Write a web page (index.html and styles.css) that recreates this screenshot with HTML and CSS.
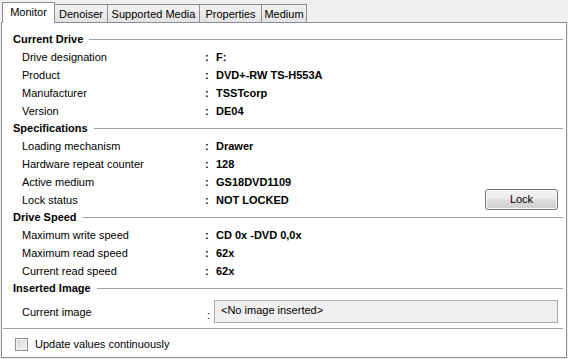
FILE: index.html
```html
<!DOCTYPE html>
<html>
<head>
<meta charset="utf-8">
<link rel="stylesheet" href="styles.css">
</head>
<body>
<div class="window">
  <div class="tabs">
    <div class="tab tab-active w-monitor">Monitor</div>
    <div class="tab w-denoiser">Denoiser</div>
    <div class="tab w-media">Supported Media</div>
    <div class="tab w-props">Properties</div>
    <div class="tab w-medium">Medium</div>
  </div>
  <div class="panel">
    <div class="section-head"><span class="head-text">Current Drive</span><span class="rule"></span></div>
    <div class="rows">
      <div class="label">Drive designation</div><div class="colon">:</div><div class="value">F:</div>
      <div class="label">Product</div><div class="colon">:</div><div class="value">DVD+-RW TS-H553A</div>
      <div class="label">Manufacturer</div><div class="colon">:</div><div class="value">TSSTcorp</div>
      <div class="label">Version</div><div class="colon">:</div><div class="value">DE04</div>
    </div>
    <div class="section-head"><span class="head-text">Specifications</span><span class="rule"></span></div>
    <div class="rows">
      <div class="label">Loading mechanism</div><div class="colon">:</div><div class="value">Drawer</div>
      <div class="label">Hardware repeat counter</div><div class="colon">:</div><div class="value">128</div>
      <div class="label">Active medium</div><div class="colon">:</div><div class="value">GS18DVD1109</div>
      <div class="label">Lock status</div><div class="colon">:</div><div class="value">NOT LOCKED</div><button class="btn">Lock</button>
    </div>
    <div class="section-head"><span class="head-text">Drive Speed</span><span class="rule"></span></div>
    <div class="rows">
      <div class="label">Maximum write speed</div><div class="colon">:</div><div class="value">CD 0x -DVD 0,0x</div>
      <div class="label">Maximum read speed</div><div class="colon">:</div><div class="value">62x</div>
      <div class="label">Current read speed</div><div class="colon">:</div><div class="value">62x</div>
    </div>
    <div class="section-head"><span class="head-text">Inserted Image</span><span class="rule"></span></div>
    <div class="image-row">
      <div class="label">Current image</div><div class="colon-plain">:</div><div class="image-box">&lt;No image inserted&gt;</div>
    </div>
    <div class="separator"></div>
    <label class="check-row"><span class="checkbox"></span><span class="check-text">Update values continuously</span></label>
  </div>
</div>
</body>
</html>
```
FILE: styles.css
```css
html, body {
  margin: 0;
  padding: 0;
  background: #f0f0f0;
}
body {
  width: 568px;
  height: 359px;
  overflow: hidden;
  font-family: "Liberation Sans", Arial, sans-serif;
  font-size: 11px;
  color: #000;
}
.window {
  display: flex;
  flex-direction: column;
}
.tabs {
  display: flex;
  align-items: flex-end;
  height: 22px;
  padding-left: 2px;
}
.tab {
  box-sizing: border-box;
  height: 18px;
  border: 1px solid #898c95;
  border-bottom: none;
  background: linear-gradient(#f3f3f3, #e3e3e3);
  display: flex;
  align-items: center;
  justify-content: center;
  margin-left: -1px;
  padding-top: 1px;
}
.tab-active {
  position: relative;
  z-index: 1;
  height: 21px;
  margin-bottom: -1px;
  margin-left: 0;
  background: #fff;
  padding-top: 0;
  padding-bottom: 2px;
}
.w-monitor { width: 53px; }
.w-denoiser { width: 54px; }
.w-media { width: 93px; }
.w-props { width: 63px; }
.w-medium { width: 46px; }
.panel {
  box-sizing: border-box;
  margin-left: 1px;
  width: 566px;
  height: 336px;
  border: 1px solid #898c95;
  background: #fff;
  padding-top: 8px;
  display: flex;
  flex-direction: column;
}
.section-head {
  display: flex;
  align-items: center;
  height: 17px;
  padding-left: 11px;
  padding-right: 3px;
  gap: 6px;
}
.head-text {
  font-weight: bold;
  line-height: 17px;
}
.rule {
  flex: 1;
  height: 1px;
  background: #a0a0a0;
}
.rows {
  display: grid;
  grid-template-columns: 183px 11px 1fr 73px;
  grid-auto-rows: 18px;
  align-items: center;
  padding-left: 20px;
  padding-right: 8px;
}
.label {
  line-height: 18px;
  white-space: nowrap;
}
.colon, .value {
  font-weight: bold;
  line-height: 18px;
  white-space: nowrap;
}
.colon {
  grid-column: 2;
}
.label {
  grid-column: 1;
}
.value {
  grid-column: 3;
}
.btn {
  grid-column: 4;
  grid-row: 4;
  align-self: start;
  margin: -2px 0 0 0;
  box-sizing: border-box;
  width: 73px;
  height: 21px;
  padding: 0 0 1px 0;
  border: 1px solid #707070;
  border-radius: 3px;
  background: linear-gradient(#f2f2f2 0%, #ebebeb 48%, #dddddd 52%, #cfcfcf 100%);
  box-shadow: inset 0 0 0 1px #fcfcfc;
  font-family: "Liberation Sans", Arial, sans-serif;
  font-size: 11px;
  color: #000;
}
.image-row {
  display: grid;
  grid-template-columns: 185px 7px 1fr;
  align-items: center;
  padding-left: 20px;
  padding-right: 8px;
  margin-top: 3px;
}
.colon-plain {
  align-self: end;
  line-height: 15px;
}
.image-box {
  box-sizing: border-box;
  height: 23px;
  border: 1px solid #adadad;
  background: #f0f0f0;
  padding-left: 6px;
  line-height: 18px;
}
.separator {
  height: 1px;
  background: #a0a0a0;
  margin: 5px 3px 0 1px;
}
.check-row {
  display: flex;
  align-items: center;
  gap: 7px;
  padding-left: 13px;
  margin-top: 9px;
  height: 13px;
}
.checkbox {
  box-sizing: border-box;
  width: 13px;
  height: 13px;
  border: 1px solid #8e8f8f;
  background: linear-gradient(135deg, #d4d4d4, #f6f6f6);
  box-shadow: inset 0 0 0 1px #f4f4f4;
}
.check-text {
  line-height: 13px;
}
```
